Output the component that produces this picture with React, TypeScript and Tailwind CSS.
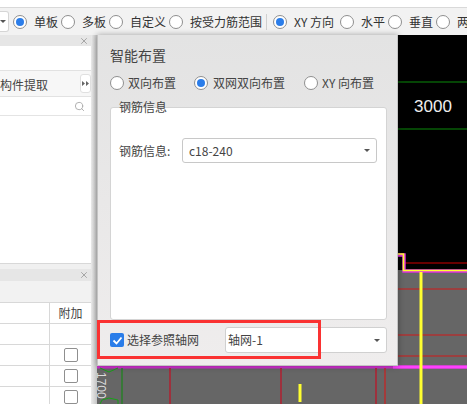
import { Search, X } from 'lucide-react';

const font = { fontFamily: '"Noto Sans CJK SC", "Liberation Sans", sans-serif' };

function Radio({ checked = false }: { checked?: boolean }) {
  return (
    <span className="w-[14px] h-[14px] shrink-0 rounded-full border border-[#8f8f8f] bg-white flex items-center justify-center">
      {checked && <span className="w-[8px] h-[8px] rounded-full bg-[#2b7de9]" />}
    </span>
  );
}

function Caret() {
  return <span className="w-0 h-0 border-l-[3px] border-r-[3px] border-t-[3px] border-l-transparent border-r-transparent border-t-[#555]" />;
}

// CAD canvas behind the dialog
function Canvas() {
  return (
    <svg className="block w-full h-full" viewBox="4 0 370 369" preserveAspectRatio="none">
      <rect x="4" width="370" height="369" fill="#000" />
      <path d="M4 235H374V369H4Z" fill="#666" />
      <path d="M305 47H374M305 94H374" stroke="#0a8a0a" strokeWidth="1" />
      <text x="340" y="77" fill="#eee" fontSize="17" textAnchor="middle" fontFamily="Liberation Sans, sans-serif">3000</text>
      <path d="M311 228H374" stroke="#8a0000" strokeWidth="1.5" />
      <path d="M300 220H311V236H374" fill="none" stroke="#e030e0" strokeWidth="3.4" />
      <path d="M300 219H310.5V235.5H374" fill="none" stroke="#ffff30" strokeWidth="1.6" />
      <path d="M305 254H374M305 300H374M305 321H374" stroke="#d01818" strokeWidth="1" />
      <path d="M4 332H374" stroke="#d030d0" strokeWidth="3" />
      <path d="M300 332H374" stroke="#ff40ff" strokeWidth="3" />
      <path d="M77 333V369M188 333V369M283 333V369" stroke="#b02030" strokeWidth="1.5" />
      <path d="M292 333V369" stroke="#e01010" strokeWidth="1" />
      <path d="M29 333V369" stroke="#0a8a0a" strokeWidth="1" />
      <path d="M328 237V369" stroke="#ffff30" strokeWidth="3" />
      <path d="M207 349V367" stroke="#ffff30" strokeWidth="3" />
      <path d="M7 333L16 337L25 333M7 369L9 365L16 363L25 365L25 369" fill="none" stroke="#18a018" strokeWidth="1" />
      <text transform="translate(4 337) rotate(90)" fill="#dcdcdc" fontSize="12" fontFamily="Liberation Sans, sans-serif">1700</text>
    </svg>
  );
}

export default function App() {
  return (
    <div className="relative w-[467px] h-[404px] overflow-hidden bg-white text-[12px] text-[#333]" style={font}>
      <div className="h-[8px] bg-white border-b border-[#d9d9d9]" />
      {/* toolbar */}
      <div className="h-[27px] bg-[#f2f2f2] flex items-center whitespace-nowrap overflow-hidden leading-none">
        <div className="w-[9px] h-[21px] shrink-0 bg-white border border-l-0 border-[#d5d5d5] rounded-r-[3px] flex items-center"><Caret /></div>
        <div className="ml-[4px] shrink-0"><Radio checked /></div>
        <span className="ml-[7px] w-[24px] shrink-0">单板</span>
        <div className="ml-[3px] shrink-0"><Radio /></div>
        <span className="ml-[7px] w-[24px] shrink-0">多板</span>
        <div className="ml-[3px] shrink-0"><Radio /></div>
        <span className="ml-[7px] w-[36px] shrink-0">自定义</span>
        <div className="ml-[3px] shrink-0"><Radio /></div>
        <span className="ml-[7px] w-[72px] shrink-0">按受力筋范围</span>
        <div className="ml-[4px] w-px h-[16px] shrink-0 bg-[#d0d0d0]" />
        <div className="ml-[6px] shrink-0"><Radio checked /></div>
        <span className="ml-[7px] w-[42px] shrink-0">XY 方向</span>
        <div className="ml-[4px] shrink-0"><Radio /></div>
        <span className="ml-[7px] w-[24px] shrink-0">水平</span>
        <div className="ml-[3px] shrink-0"><Radio /></div>
        <span className="ml-[7px] w-[24px] shrink-0">垂直</span>
        <div className="ml-[3px] shrink-0"><Radio /></div>
        <span className="ml-[7px] shrink-0">两向</span>
      </div>

      <div className="flex h-[369px]">
        {/* left panel */}
        <div className="w-[91px] shrink-0 bg-[#f0f0f0] flex flex-col">
          <div className="h-[11px] shrink-0 bg-[#e6e6e6] flex items-center justify-end pr-[2px]"><X size={10} className="text-[#999]" /></div>
          <div className="h-[24px] shrink-0 bg-white" />
          <div className="h-[27px] shrink-0 bg-[#f7f7f7] border-y border-[#e2e2e2] flex items-center justify-between">
            <span className="text-[#444] pt-[2px] whitespace-nowrap">构件提取</span>
            <span className="w-[11px] h-[19px] shrink-0 bg-white border border-[#e0e0e0] rounded-[3px] text-[#666] flex items-center justify-center">
              <svg width="7" height="5" viewBox="0 0 7 5"><path d="M0 0L3 2.5L0 5ZM4 0L7 2.5L4 5Z" fill="#666" /></svg>
            </span>
          </div>
          <div className="h-[19px] shrink-0 bg-white border-b border-[#e4e4e4] flex items-center justify-end pr-[6px]"><Search size={11} className="text-[#aaa]" /></div>
          <div className="h-[148px] shrink-0 bg-white border-b border-[#d8d8d8]" />
          <div className="h-[5px] shrink-0" />
          <div className="h-[12px] shrink-0 bg-[#e6e6e6] flex items-center justify-end pr-[2px]"><X size={10} className="text-[#999]" /></div>
          <div className="h-[22px] shrink-0 bg-[#f2f2f2] border-b border-[#d8d8d8]" />
          <div className="flex-1 bg-white grid grid-cols-[50px_1fr] auto-rows-[21px] text-[#444] overflow-hidden">
            <div className="border-b border-r border-[#d8d8d8]" />
            <div className="border-b border-[#d8d8d8] flex items-center justify-center">附加</div>
            {[false, true, true, true].map((box, i) => (
              <div key={i} className="contents">
                <div className="border-b border-r border-[#d8d8d8]" />
                <div className="border-b border-[#d8d8d8] flex items-center justify-center">
                  {box && <span className="w-[14px] h-[14px] border border-[#8f8f8f] rounded-[2px] bg-white" />}
                </div>
              </div>
            ))}
          </div>
        </div>
        <div className="w-[6px] shrink-0 bg-gradient-to-r from-[#ececec] to-[#c4c4c4]" />
        <div className="flex-1 min-w-0"><Canvas /></div>
      </div>

      {/* dialog */}
      <div className="absolute left-[97px] top-[35px] w-[301px] h-[331px] bg-gradient-to-b from-[#e3e3e3] to-[#efeded] border-l border-r border-b border-[#c4c4c4] shadow-[0_0_6px_rgba(0,0,0,0.35)] flex flex-col px-[12px] text-[#444]">
        <div className="mt-[11px] text-[14px] leading-[18px] shrink-0">智能布置</div>
        <div className="mt-[12px] flex items-center leading-none shrink-0 whitespace-nowrap">
          <Radio />
          <span className="ml-[4px] w-[48px] shrink-0">双向布置</span>
          <div className="ml-[18px] shrink-0"><Radio checked /></div>
          <span className="ml-[5px] w-[72px] shrink-0">双网双向布置</span>
          <div className="ml-[19px] shrink-0"><Radio /></div>
          <span className="ml-[4px] shrink-0">XY 向布置</span>
        </div>
        {/* group box */}
        <div className="relative mt-[17px] h-[213px] w-[277px] shrink-0 bg-white border border-[#d4d4d4] rounded-[3px] pl-[8px] pt-[30px]">
          <span className="absolute left-[8px] top-[-9px] leading-[16px]">钢筋信息</span>
          <div className="flex items-center leading-none whitespace-nowrap">
            <span className="w-[63px] shrink-0">钢筋信息:</span>
            <div className="w-[195px] h-[25px] bg-white border border-[#c8c8c8] rounded-[3px] flex items-center justify-between px-[6px]">
              <span>c18-240</span>
              <Caret />
            </div>
          </div>
        </div>
        <div className="mt-[7px] flex items-center leading-none shrink-0 whitespace-nowrap">
          <span className="w-[14px] h-[14px] shrink-0 rounded-[2px] bg-[#2b7de9] flex items-center justify-center">
            <svg width="11" height="11" viewBox="0 0 11 11"><path d="M1.5 5.5L4.5 8.5L9.5 2.5" fill="none" stroke="#fff" strokeWidth="1.8" /></svg>
          </span>
          <span className="ml-[3px] w-[72px] shrink-0">选择参照轴网</span>
          <div className="ml-[26px] w-[162px] h-[26px] shrink-0 bg-white border border-[#d0d0d0] rounded-[3px] flex items-center justify-between pl-[2px] pr-[6px]">
            <span>轴网-1</span>
            <Caret />
          </div>
        </div>
      </div>

      {/* red highlight box */}
      <div className="absolute left-[97px] top-[320px] w-[224px] h-[39px] border-[3px] border-[#fa3232]" />
    </div>
  );
}
